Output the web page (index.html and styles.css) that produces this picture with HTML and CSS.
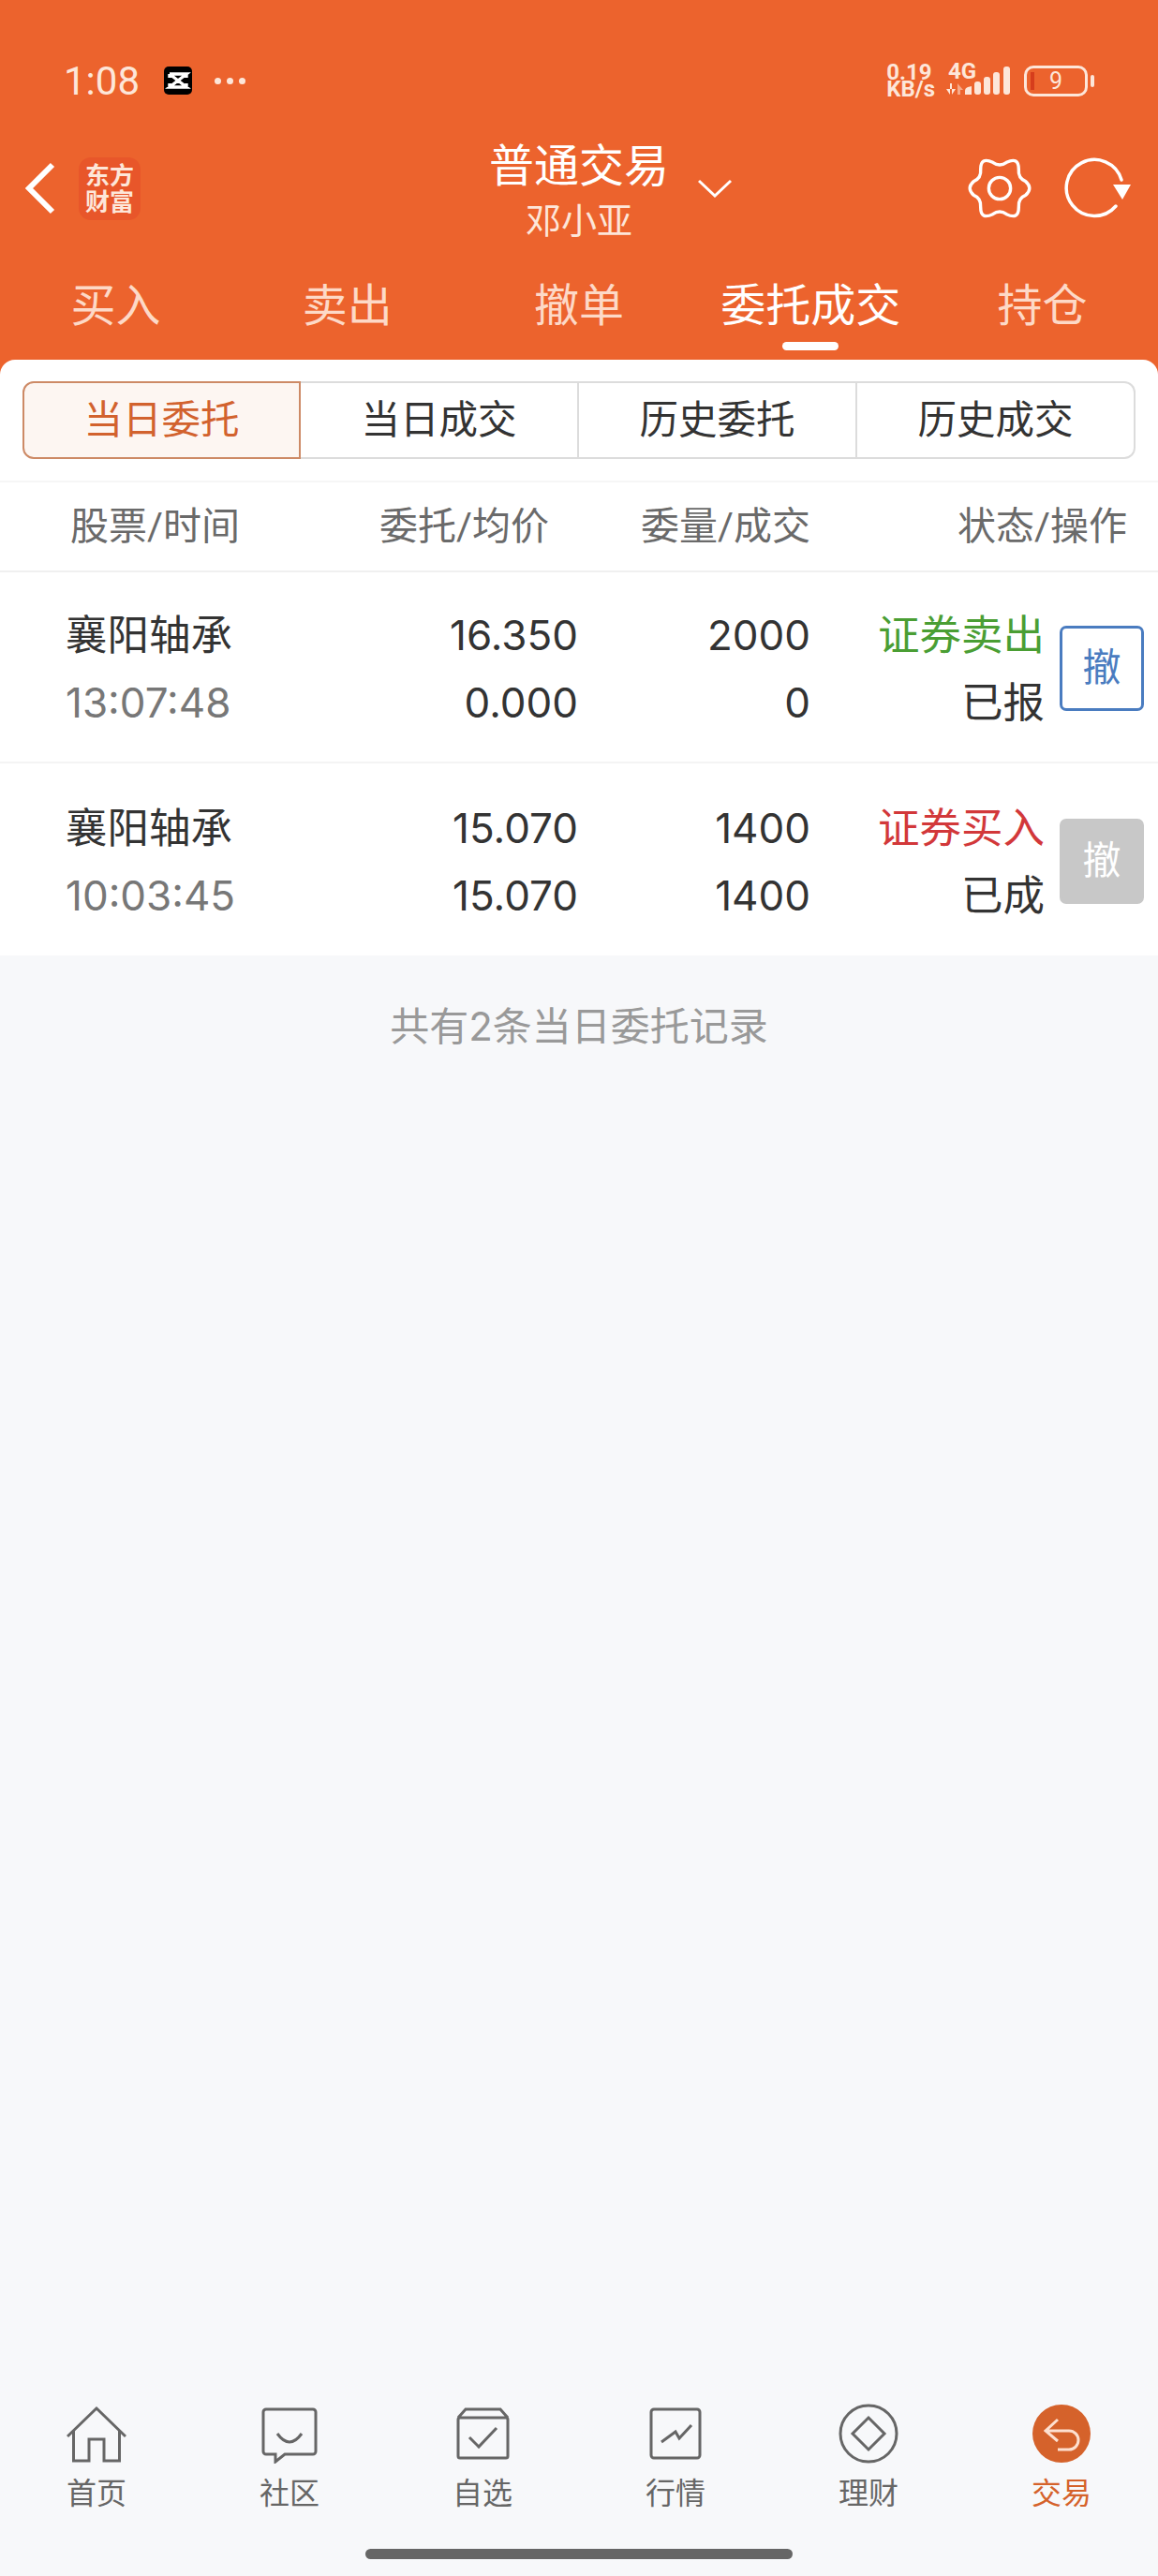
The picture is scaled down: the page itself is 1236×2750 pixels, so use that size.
FILE: index.html
```html
<!DOCTYPE html>
<html lang="zh-CN">
<head>
    <meta charset="UTF-8">
    <meta name="viewport" content="width=device-width, initial-scale=1.0">
    <title>委托成交</title>
    <link rel="stylesheet" href="styles.css">
</head>
<body>
    <div class="page">
        <div class="header">
            <div class="status-bar">
                <div class="status-left">
                    <span class="clock">1:08</span>
                    <svg class="app-badge" viewBox="0 0 30 30">
                        <rect width="30" height="30" rx="5" fill="#000"/>
                        <path d="M6 8H24L6 22H24L6 8M6 8V12M24 8V12M6 22V18M24 22V18" fill="none" stroke="#fff" stroke-width="3.4"/>
                    </svg>
                    <span class="more-dots"><i></i><i></i><i></i></span>
                </div>
                <div class="status-right">
                    <div class="net-speed"><span>0.19</span><span>KB/s</span></div>
                    <div class="signal">
                        <span class="signal-label">4G</span>
                        <svg class="signal-bars" viewBox="0 0 68 40">
                            <path d="M0 33L4 39V27H6V39L10 33Z" fill="#fde6d9"/>
                            <path d="M12 39V27L18 34H15V39Z" fill="#f7a988"/>
                            <path d="M20 39V35Q20 32 23 31L27 30V39Z" fill="#fde6d9"/>
                            <rect x="30" y="25" width="7" height="14" rx="3" fill="#fde6d9"/>
                            <rect x="40" y="20" width="7" height="19" rx="3" fill="#fde6d9"/>
                            <rect x="50" y="15" width="7" height="24" rx="3" fill="#fde6d9"/>
                            <rect x="61" y="9" width="7" height="30" rx="3" fill="#fde6d9"/>
                        </svg>
                    </div>
                    <div class="battery">
                        <div class="battery-body"><i class="battery-low"></i><span>9</span></div>
                        <i class="battery-cap"></i>
                    </div>
                </div>
            </div>

            <div class="toolbar">
                <div class="toolbar-left">
                    <svg class="back-icon" viewBox="0 0 34 56">
                        <path d="M30 3L5 28L30 53" fill="none" stroke="#fff" stroke-width="6"/>
                    </svg>
                    <div class="logo">东方<br>财富</div>
                </div>
                <div class="title-box">
                    <div class="title">普通交易</div>
                    <div class="account">邓小亚</div>
                </div>
                <div class="toolbar-right">
                    <svg class="chevron-icon" viewBox="0 0 36 20">
                        <path d="M1 2L18 18L35 2" fill="none" stroke="#fff" stroke-width="3"/>
                    </svg>
                    <svg class="gear-icon" viewBox="-35 -35 70 70">
                        <path d="M28.5 -7.6Q37 0 28.5 7.6Q20 11 20.9 20.9Q21 35 7.6 28.5Q0 23 -7.6 28.5Q-21 35 -20.9 20.9Q-20 11 -28.500 7.6Q-37 0 -28.5 -7.6Q-20 -11 -20.9 -20.9Q-21 -35 -7.6 -28.5Q0 -23 7.6 -28.5Q21 -35 20.9 -20.9Q20 -11 28.5 -7.6Z" fill="none" stroke="#fff" stroke-width="3.5"/>
                        <circle r="12" fill="none" stroke="#fff" stroke-width="3.5"/>
                    </svg>
                    <svg class="refresh-icon" viewBox="0 0 72 68">
                        <path d="M55 53A30 30 0 1 1 61 25" fill="none" stroke="#fff" stroke-width="3.5" stroke-linecap="round"/>
                        <path d="M52 30H71L62 46Z" fill="#fff"/>
                    </svg>
                </div>
            </div>

            <div class="tabs">
                <div class="tab">买入</div>
                <div class="tab">卖出</div>
                <div class="tab">撤单</div>
                <div class="tab tab-active">委托成交</div>
                <div class="tab">持仓</div>
            </div>
        </div>

        <div class="content">
            <div class="panel">
                <div class="segments">
                    <div class="segment segment-active">当日委托</div>
                    <div class="segment">当日成交</div>
                    <div class="segment">历史委托</div>
                    <div class="segment">历史成交</div>
                </div>

                <div class="list-head">
                    <span>股票/时间</span>
                    <span>委托/均价</span>
                    <span>委量/成交</span>
                    <span>状态/操作</span>
                </div>

                <div class="order">
                    <div class="stock">襄阳轴承</div>
                    <div class="num">16.350</div>
                    <div class="num">2000</div>
                    <div class="state sell">证券卖出</div>
                    <div class="cancel-btn">撤</div>
                    <div class="time">13:07:48</div>
                    <div class="num">0.000</div>
                    <div class="num">0</div>
                    <div class="state">已报</div>
                </div>

                <div class="order">
                    <div class="stock">襄阳轴承</div>
                    <div class="num">15.070</div>
                    <div class="num">1400</div>
                    <div class="state buy">证券买入</div>
                    <div class="cancel-btn cancel-off">撤</div>
                    <div class="time">10:03:45</div>
                    <div class="num">15.070</div>
                    <div class="num">1400</div>
                    <div class="state">已成</div>
                </div>
            </div>
            <div class="record-count">共有2条当日委托记录</div>
        </div>

        <div class="nav">
            <div class="nav-item">
                <svg viewBox="0 0 64 64"><path d="M1 35L32 5L63 35M7.500 29V61H24V38H40V61H56.500V29"/></svg>
                <span>首页</span>
            </div>
            <div class="nav-item">
                <svg viewBox="0 0 64 64"><path d="M7 6H57A3 3 0 0 1 60 9V51A3 3 0 0 1 57 54H27L17 62V54H7A3 3 0 0 1 4 51V9A3 3 0 0 1 7 6Z"/><path d="M19 32Q32 50 45 32"/></svg>
                <span>社区</span>
            </div>
            <div class="nav-item">
                <svg viewBox="0 0 64 64"><path d="M6 15L14 6H51L59 15M8 15H57A2 2 0 0 1 59 17V56A2 2 0 0 1 57 58H8A2 2 0 0 1 6 56V17A2 2 0 0 1 8 15Z"/><path d="M18 36L28 46L47 26"/></svg>
                <span>自选</span>
            </div>
            <div class="nav-item">
                <svg viewBox="0 0 64 64"><rect x="6" y="6" width="52" height="52" rx="3"/><path d="M17 41L32 30L36 37L49 23"/></svg>
                <span>行情</span>
            </div>
            <div class="nav-item">
                <svg viewBox="0 0 64 64"><circle cx="32" cy="32" r="30"/><path d="M32 15L49 32L32 49L15 32Z"/></svg>
                <span>理财</span>
            </div>
            <div class="nav-item nav-active">
                <svg viewBox="0 0 64 64"><circle class="trade-bg" cx="32" cy="32" r="31"/><path class="trade-arrow" d="M28 17L15 29L28 40M15 29H40A10 10 0 0 1 40 49H28"/></svg>
                <span>交易</span>
            </div>
        </div>
        <div class="home-bar"></div>
    </div>
</body>
</html>
```

FILE: styles.css
```css
*{
    box-sizing: border-box;
}
body{
    margin: 0;
    font-family: Roboto, "Noto Sans CJK SC", sans-serif;
    color: #333;
}
.page{
    display: flex;
    flex-direction: column;
    width: 1236px;
    height: 2750px;
    overflow: hidden;
    background-color: #f7f8fa;
}

/* orange top area */
.header{
    height: 400px;
    padding-top: 60px;
    background-color: #ec632d;
}
.status-bar{
    display: flex;
    justify-content: space-between;
    height: 52px;
    padding: 0 68px 0 68px;
}
.status-left, .status-right{
    display: flex;
    align-items: center;
}
.clock{
    font-size: 42px;
    color: #fde6d9;
}
.app-badge{
    width: 30px;
    height: 30px;
    margin-left: 26px;
}
.more-dots{
    display: flex;
    gap: 6px;
    margin-left: 24px;
}
.more-dots i{
    width: 7px;
    height: 7px;
    border-radius: 50%;
    background-color: #fde6d9;
}
.net-speed{
    display: flex;
    flex-direction: column;
    font-size: 24px;
    font-weight: 700;
    line-height: 18px;
    color: #fde6d9;
}
.signal{
    position: relative;
    width: 68px;
    height: 40px;
    margin: 0 0 8px 12px;
    padding: 5px 0 0 2px;
}
.signal-label{
    display: block;
    font-size: 24px;
    font-weight: 700;
    line-height: 18px;
    color: #fde6d9;
}
.signal-bars{
    position: absolute;
    left: 0;
    top: 0;
    width: 68px;
    height: 40px;
}
.battery{
    display: flex;
    align-items: center;
    margin-left: 15px;
}
.battery-body{
    position: relative;
    display: flex;
    align-items: center;
    justify-content: center;
    width: 68px;
    height: 33px;
    border: 3px solid #fde6d9;
    border-radius: 10px;
    font-size: 25px;
    color: #fde6d9;
}
.battery-low{
    position: absolute;
    left: 4px;
    top: 4px;
    bottom: 4px;
    width: 4px;
    background-color: #d63d1c;
}
.battery-cap{
    width: 4px;
    height: 13px;
    margin-left: 3px;
    border-radius: 2px;
    background-color: #fde6d9;
}

.toolbar{
    display: grid;
    grid-template-columns: 1fr auto 1fr;
    align-items: center;
    height: 116px;
    margin-top: 33px;
}
.toolbar-left{
    display: flex;
    align-items: center;
    margin-top: -4px;
    padding-left: 26px;
}
.back-icon{
    width: 34px;
    height: 56px;
}
.logo{
    width: 66px;
    height: 67px;
    margin-left: 24px;
    padding-top: 6px;
    border-radius: 13px;
    background-color: #e8562a;
    font-size: 26px;
    font-weight: 700;
    line-height: 28px;
    text-align: center;
    color: #fde6d9;
}
.title-box{
    height: 116px;
    padding-top: 4px;
    text-align: center;
    color: #fff;
}
.title{
    font-size: 48px;
    line-height: 58px;
}
.account{
    font-size: 38px;
    line-height: 58px;
    color: #fde6d9;
}
.toolbar-right{
    display: flex;
    align-items: center;
    margin-top: -4px;
    padding-right: 28px;
}
.chevron-icon{
    width: 36px;
    height: 20px;
    margin-left: 31px;
}
.gear-icon{
    width: 68px;
    height: 68px;
    margin-left: auto;
}
.refresh-icon{
    width: 72px;
    height: 68px;
    margin-left: 35px;
}

.tabs{
    display: grid;
    grid-template-columns: repeat(5, 1fr);
}
.tab{
    position: relative;
    height: 123px;
    padding-top: 36px;
    font-size: 48px;
    line-height: 60px;
    text-align: center;
    color: #fdd9c7;
}
.tab-active{
    color: #fff;
}
.tab-active::after{
    content: "";
    position: absolute;
    left: 50%;
    top: 104px;
    width: 60px;
    height: 9px;
    margin-left: -30px;
    border-radius: 5px;
    background-color: #fff;
}

/* white list panel */
.content{
    flex: 1;
    margin-top: -16px;
    background: linear-gradient(#ec632d 16px, transparent 16px);
}
.panel{
    border-radius: 16px 16px 0 0;
    background-color: #fff;
}
.segments{
    display: flex;
    margin: 0 24px;
    padding-top: 23px;
    box-sizing: content-box;
}
.segment{
    flex: 0 0 297px;
    height: 83px;
    border: 2px solid #dcdcdc;
    border-left: none;
    font-size: 41.5px;
    line-height: 79px;
    text-align: center;
}
.segment:last-child{
    border-radius: 0 12px 12px 0;
}
.segment-active{
    border: 2px solid #cd8a66;
    border-radius: 12px 0 0 12px;
    background-color: #fdf6f2;
    color: #d2622e;
}
.list-head{
    display: grid;
    grid-template-columns: 232px 279px 279px 338px;
    height: 98px;
    margin-top: 23px;
    padding-left: 75px;
    border-top: 2px solid #f6f6f6;
    border-bottom: 2px solid #f0f0f0;
    font-size: 41px;
    line-height: 95px;
    color: #6a6a6a;
}
.list-head span:not(:first-child){
    text-align: right;
}
.order{
    display: grid;
    grid-template-columns: 281px 266px 248px 250px 106px;
    grid-template-rows: 72px 72px;
    align-content: center;
    height: 204px;
    padding: 6px 0 0 70px;
    line-height: 72px;
    border-bottom: 2px solid #f4f4f4;
}
.order:last-child{
    height: 205px;
    border-bottom: none;
}
.stock{
    font-size: 44.5px;
}
.time{
    margin-top: -1px;
    font-family: Inter, sans-serif;
    font-size: 44px;
    color: #777;
}
.num{
    margin-top: -1px;
    font-family: Inter, sans-serif;
    font-size: 44px;
    text-align: right;
}
.state{
    font-size: 44.5px;
    text-align: right;
}
.sell{
    color: #4a9e34;
}
.buy{
    color: #d2383a;
}
.cancel-btn{
    grid-column: 5;
    grid-row: 1 / span 2;
    align-self: center;
    justify-self: end;
    width: 90px;
    height: 91px;
    margin-top: -3px;
    border: 3px solid #4a7cc0;
    border-radius: 7px;
    font-size: 41px;
    line-height: 85px;
    text-align: center;
    color: #4a7cc0;
}
.cancel-off{
    border-color: #c8c8c8;
    background-color: #c8c8c8;
    color: #fff;
}
.record-count{
    padding: 48px 0;
    font-family: Inter, "Noto Sans CJK SC", sans-serif;
    font-size: 42px;
    line-height: 56px;
    text-align: center;
    color: #999;
}

/* bottom navigation */
.nav{
    display: grid;
    grid-template-columns: repeat(6, 1fr);
}
.nav-item{
    display: flex;
    flex-direction: column;
    align-items: center;
    gap: 12px;
    font-size: 32px;
    line-height: 40px;
    color: #666;
}
.nav-item svg{
    width: 64px;
    height: 64px;
    fill: none;
    stroke: #666;
    stroke-width: 3;
}
.nav-active{
    color: #d5622b;
}
.nav-item .trade-bg{
    fill: #d5622b;
    stroke: none;
}
.nav-item .trade-arrow{
    stroke: #fde0d0;
}
.home-bar{
    width: 456px;
    height: 11px;
    margin: 39px auto 18px;
    border-radius: 6px;
    background-color: #666;
}
```
